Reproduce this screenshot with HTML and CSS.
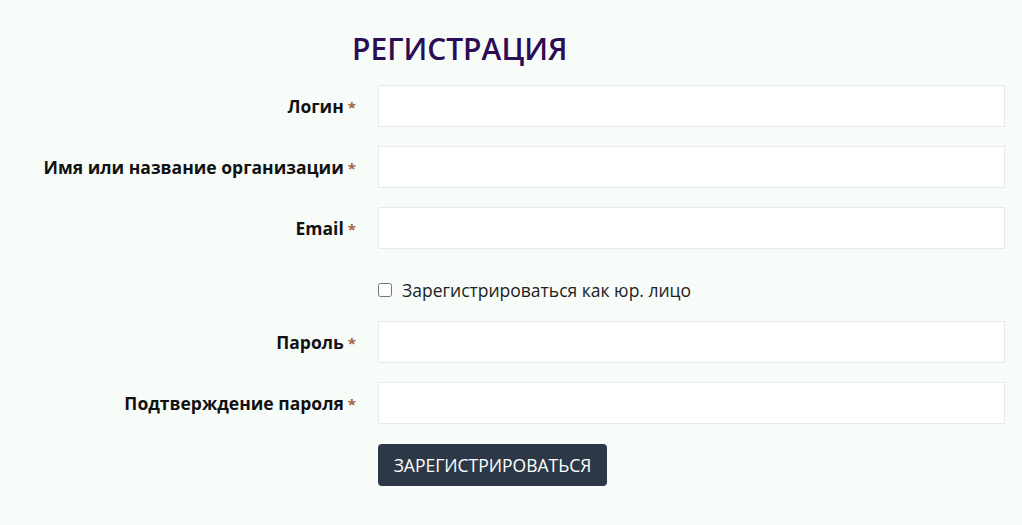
FILE: index.html
```html
<!DOCTYPE html>
<html lang="ru">
<head>
<meta charset="utf-8">
<link rel="stylesheet" href="styles.css">
</head>
<body>
<form class="reg">
  <h1 class="title">РЕГИСТРАЦИЯ</h1>
  <div class="row">
    <label class="label">Логин<span class="req">*</span></label>
    <input class="field" type="text">
  </div>
  <div class="row">
    <label class="label">Имя или название организации<span class="req">*</span></label>
    <input class="field" type="text">
  </div>
  <div class="row">
    <label class="label">Email<span class="req">*</span></label>
    <input class="field" type="text">
  </div>
  <div class="row row-check">
    <span></span>
    <label class="check"><input type="checkbox" class="cb"><span>Зарегистрироваться как юр. лицо</span></label>
  </div>
  <div class="row">
    <label class="label">Пароль<span class="req">*</span></label>
    <input class="field" type="password">
  </div>
  <div class="row">
    <label class="label">Подтверждение пароля<span class="req">*</span></label>
    <input class="field" type="password">
  </div>
  <div class="row row-btn">
    <span></span>
    <div><button type="button" class="btn">ЗАРЕГИСТРИРОВАТЬСЯ</button></div>
  </div>
</form>
</body>
</html>
```
FILE: styles.css
```css
html, body {
  margin: 0;
  padding: 0;
  background: #f7fcf9;
  font-family: "Open Sans", "Liberation Sans", sans-serif;
}
.reg {
  display: flex;
  flex-direction: column;
  padding: 27px 17px 0 0;
}
.title {
  margin: 0 0 14px 352px;
  font-size: 30px;
  font-weight: 600;
  color: #2b0c55;
  line-height: 44px;
}
.row {
  display: grid;
  grid-template-columns: 356px 1fr;
  column-gap: 22px;
  align-items: center;
  margin-bottom: 19px;
}
.label {
  text-align: right;
  font-weight: 700;
  font-size: 17.5px;
  color: #111;
}
.req {
  color: #a0634d;
  font-weight: 700;
  font-size: 15px;
  margin-left: 4px;
}
.field {
  box-sizing: border-box;
  height: 42px;
  width: 100%;
  background: #fff;
  border: 1px solid #e6ebe7;
  border-radius: 0;
  margin: 0;
}
.row-check {
  margin-top: 10px;
  height: 24px;
}
.check {
  display: flex;
  align-items: center;
  font-size: 17.5px;
  color: #222;
}
.cb {
  margin: 0 10px 0 0;
  width: 14px;
  height: 14px;
}
.row-btn {
  margin-top: 1px;
}
.btn {
  height: 42px;
  width: 229px;
  background: #2d3847;
  color: #fff;
  border: none;
  border-radius: 4px;
  font-family: "Open Sans", "Liberation Sans", sans-serif;
  font-size: 17.5px;
  padding: 0;
}
```
